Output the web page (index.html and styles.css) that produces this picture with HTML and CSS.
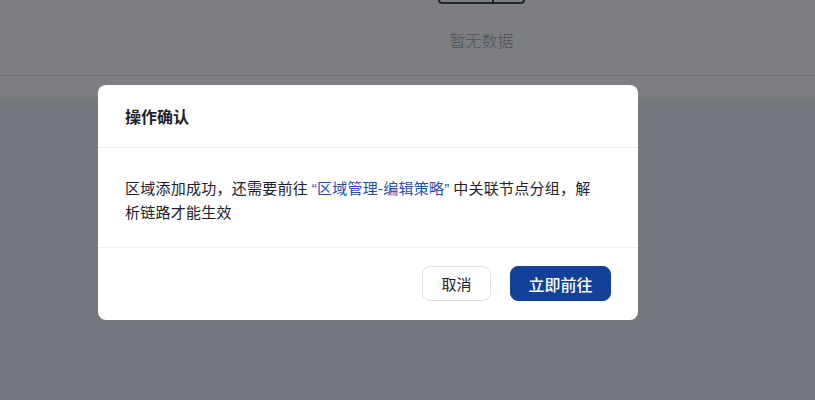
FILE: index.html
```html
<!DOCTYPE html>
<html lang="zh-CN">
<head>
<meta charset="utf-8">
<title>操作确认</title>
<link rel="stylesheet" href="styles.css">
</head>
<body>
<div class="page">
  <div class="card">
    <div class="empty">
      <div class="empty-icon"><span class="seg"></span><span class="seg"></span></div>
      <div class="empty-text">暂无数据</div>
    </div>
    <div class="card-foot"></div>
  </div>
</div>
<div class="mask">
  <div class="modal">
    <div class="modal-header">操作确认</div>
    <div class="modal-body">区域添加成功，还需要前往 <span class="q">“</span><a class="link">区域管理-编辑策略</a><span class="q">”</span> 中关联节点分组，解析链路才能生效</div>
    <div class="modal-footer">
      <button class="btn btn-default">取消</button>
      <button class="btn btn-primary">立即前往</button>
    </div>
  </div>
</div>
</body>
</html>
```
FILE: styles.css
```css
* { box-sizing: border-box; }
html, body { margin: 0; padding: 0; }
body {
  width: 815px;
  height: 400px;
  overflow: hidden;
  background: #eff2f6;
  font-family: "Noto Sans CJK SC", "Noto Sans", sans-serif;
  color: #1d2129;
}
.page { height: 400px; }
.card {
  background: #ffffff;
  height: 99px;
}
.empty {
  height: 76px;
  padding-left: 148px;
  border-bottom: 1px solid #e0e2e5;
  display: flex;
  flex-direction: column;
  align-items: center;
}
.empty-icon {
  width: 87px;
  height: 4px;
  display: flex;
  border: 2px solid #3a3d44;
  border-top: none;
  border-radius: 0 0 5px 5px;
}
.seg { flex: 1; }
.seg + .seg { border-left: 2px solid #3a3d44; flex: 0 0 31px; }
.empty-text {
  margin-top: 25px;
  font-size: 16px;
  line-height: 22px;
  font-weight: 300;
  color: #9aa0a9;
}
.mask {
  position: fixed;
  inset: 0;
  background: rgba(17, 20, 28, 0.55);
}
.modal {
  position: absolute;
  left: 98px;
  top: 85px;
  width: 540px;
  background: #ffffff;
  border-radius: 8px;
}
.modal-header {
  height: 63px;
  padding: 19px 27px 0;
  font-size: 16px;
  line-height: 24px;
  font-weight: 700;
  color: #1d2129;
  border-bottom: 1px solid #eceef1;
}
.modal-body {
  padding: 28px 45px 0 27px;
  height: 100px;
  font-size: 15px;
  line-height: 23px;
  letter-spacing: 0.25px;
  color: #1d2129;
  border-bottom: 1px solid #eceef1;
}
.q { font-family: "Liberation Sans", sans-serif; color: #1d4fb0; }
.link { color: #1d4fb0; }
.modal-footer {
  display: flex;
  justify-content: flex-end;
  gap: 19px;
  padding: 18px 27px 19px;
}
.btn {
  height: 35px;
  border-radius: 8px;
  font-family: "Noto Sans CJK SC", "Noto Sans", sans-serif;
  font-size: 15px;
  line-height: 20px;
  padding: 0;
}
.btn-default {
  width: 69px;
  background: #ffffff;
  border: 1px solid #dcdfe4;
  color: #1d2129;
}
.btn-primary {
  width: 101px;
  background: #12409a;
  border: 1px solid #12409a;
  color: #ffffff;
  font-size: 16px;
  font-weight: 500;
}
```
